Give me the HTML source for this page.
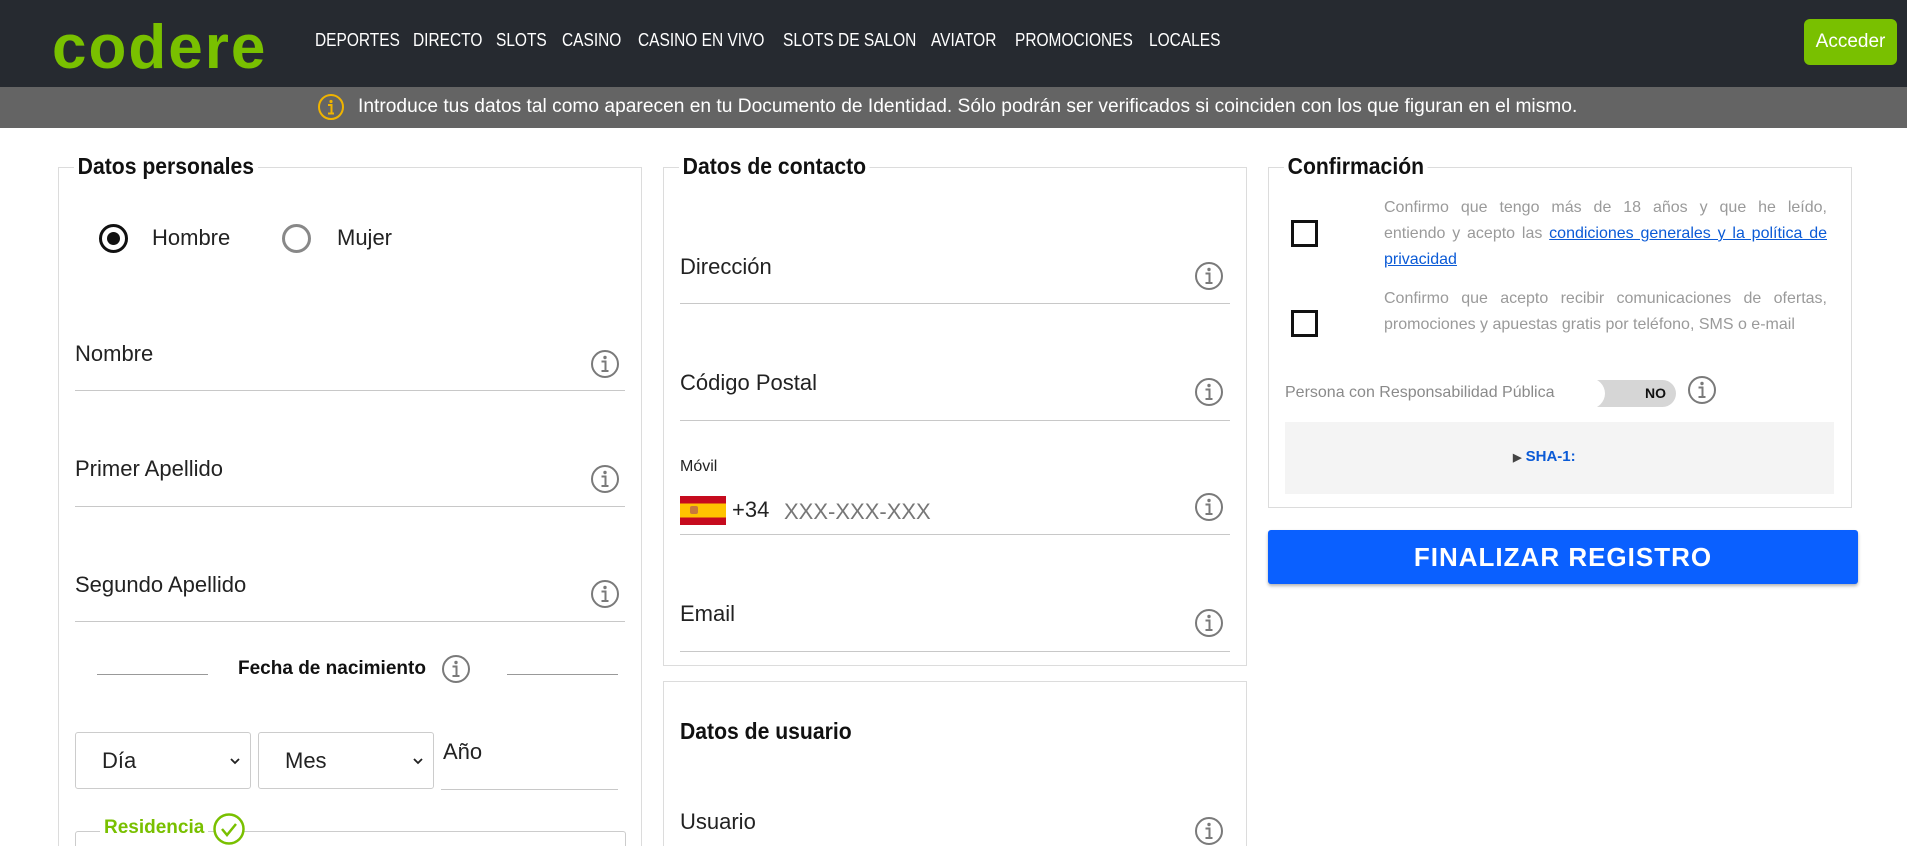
<!DOCTYPE html>
<html><head><meta charset="utf-8"><style>
*{margin:0;padding:0;box-sizing:border-box}
html{width:1907px;height:846px;overflow:hidden}
body{width:1907px;height:846px;overflow:hidden;background:#fff;font-family:"Liberation Sans",Arial,sans-serif;position:relative;color:#222}
.a{position:absolute;white-space:nowrap}
.hdr{left:0;top:0;width:1907px;height:87px;background:#262a30}
.bar{left:0;top:87px;width:1907px;height:41px;background:#646464}
.nav{top:30px;color:#fff;font-size:18px;transform:scaleX(.86);transform-origin:left}
.box{border:1px solid #dcdcdc}
.leg{font-size:23px;font-weight:bold;background:#fff;padding:0 4px;color:#111;transform:scaleX(.92);transform-origin:left}
.lbl{font-size:22px;color:#222}
.ln{height:1px;background:#c8c8c8}
.ii{width:30px;height:30px}
.gt{font-size:16px;color:#9a9a9a;line-height:26px;width:443px}
.gt div{text-align:justify;text-align-last:justify}
.gt div.l{text-align-last:left}
</style></head><body>
<div class="a hdr"></div>
<div class="a" style="left:52px;top:8px;font-size:62px;font-weight:bold;color:#79c000;letter-spacing:2px;line-height:80px">codere</div>
<div class="a nav" style="left:315px">DEPORTES</div>
<div class="a nav" style="left:413px">DIRECTO</div>
<div class="a nav" style="left:496px">SLOTS</div>
<div class="a nav" style="left:562px">CASINO</div>
<div class="a nav" style="left:638px">CASINO EN VIVO</div>
<div class="a nav" style="left:783px">SLOTS DE SALON</div>
<div class="a nav" style="left:931px">AVIATOR</div>
<div class="a nav" style="left:1015px">PROMOCIONES</div>
<div class="a nav" style="left:1149px">LOCALES</div>
<div class="a" style="left:1804px;top:19px;width:93px;height:46px;background:#79c000;border-radius:6px;color:#fff;font-size:19px;line-height:46px;text-align:center">Acceder</div>
<div class="a bar"></div>
<svg class="a" style="left:317px;top:93px" width="28" height="28" viewBox="0 0 28 28"><circle cx="14" cy="14" r="12" fill="none" stroke="#f0b400" stroke-width="2"/><circle cx="14" cy="8.5" r="1.6" fill="#f0b400"/><path d="M11 12h3.5v8M11 20.5h6" stroke="#f0b400" stroke-width="2" fill="none"/></svg>
<div class="a" style="left:358px;top:96px;font-size:19px;color:#fff;transform:scaleX(1.01);transform-origin:left">Introduce tus datos tal como aparecen en tu Documento de Identidad. Sólo podrán ser verificados si coinciden con los que figuran en el mismo.</div>

<!-- col1 -->
<div class="a box" style="left:58px;top:167px;width:584px;height:680px;border-bottom:none"></div>
<div class="a leg" style="left:74px;top:153px">Datos personales</div>
<div class="a" style="left:99px;top:224px;width:29px;height:29px;border:3px solid #111;border-radius:50%"></div>
<div class="a" style="left:107px;top:232px;width:13px;height:13px;background:#111;border-radius:50%"></div>
<div class="a lbl" style="left:152px;top:225px">Hombre</div>
<div class="a" style="left:282px;top:224px;width:29px;height:29px;border:3px solid #888;border-radius:50%"></div>
<div class="a lbl" style="left:337px;top:225px">Mujer</div>
<div class="a lbl" style="left:75px;top:341px">Nombre</div><div class="a ln" style="left:75px;top:390px;width:550px"></div>
<div class="a lbl" style="left:75px;top:456px">Primer Apellido</div><div class="a ln" style="left:75px;top:506px;width:550px"></div>
<div class="a lbl" style="left:75px;top:572px">Segundo Apellido</div><div class="a ln" style="left:75px;top:621px;width:550px"></div>
<div class="a ln" style="left:97px;top:674px;width:111px;background:#999"></div>
<div class="a ln" style="left:507px;top:674px;width:111px;background:#999"></div>
<div class="a" style="left:238px;top:658px;font-size:19px;font-weight:bold;color:#111">Fecha de nacimiento</div>
<div class="a" style="left:75px;top:732px;width:176px;height:57px;border:1px solid #ccc;border-radius:3px"></div>
<div class="a lbl" style="left:102px;top:748px">Día</div>
<svg class="a" style="left:229px;top:756px" width="12" height="10"><path d="M2 3l4 4 4-4" stroke="#222" stroke-width="1.8" fill="none"/></svg>
<div class="a" style="left:258px;top:732px;width:176px;height:57px;border:1px solid #ccc;border-radius:3px"></div>
<div class="a lbl" style="left:285px;top:748px">Mes</div>
<svg class="a" style="left:412px;top:756px" width="12" height="10"><path d="M2 3l4 4 4-4" stroke="#222" stroke-width="1.8" fill="none"/></svg>
<div class="a lbl" style="left:443px;top:739px">Año</div><div class="a ln" style="left:441px;top:789px;width:177px"></div>
<div class="a" style="left:75px;top:831px;width:551px;height:16px;border:1px solid #ccc;border-bottom:none;border-radius:3px 3px 0 0"></div>
<div class="a" style="left:100px;top:817px;background:#fff;padding:0 4px;font-size:19px;font-weight:bold;color:#79c000">Residencia</div>
<svg class="a" style="left:212px;top:812px" width="34" height="34" viewBox="0 0 34 34"><circle cx="17" cy="17" r="14.5" fill="#fff" stroke="#79c000" stroke-width="2.5"/><path d="M10 17l5 6 9-11" stroke="#79c000" stroke-width="2.5" fill="none"/></svg>

<!-- col2 -->
<div class="a box" style="left:663px;top:167px;width:584px;height:499px"></div>
<div class="a leg" style="left:679px;top:153px">Datos de contacto</div>
<div class="a lbl" style="left:680px;top:254px">Dirección</div><div class="a ln" style="left:680px;top:303px;width:550px"></div>
<div class="a lbl" style="left:680px;top:370px">Código Postal</div><div class="a ln" style="left:680px;top:420px;width:550px"></div>
<div class="a" style="left:680px;top:458px;font-size:16px">Móvil</div>
<div class="a" style="left:680px;top:496px;width:46px;height:29px;background:linear-gradient(#c60b1e 0 25%,#ffc400 25% 75%,#c60b1e 75%)"></div>
<div class="a" style="left:690px;top:506px;width:8px;height:8px;background:#c8783c;border-radius:2px"></div>
<div class="a lbl" style="left:732px;top:497px">+34</div>
<div class="a lbl" style="left:784px;top:499px;color:#777">XXX-XXX-XXX</div>
<div class="a ln" style="left:680px;top:534px;width:550px"></div>
<div class="a lbl" style="left:680px;top:601px">Email</div><div class="a ln" style="left:680px;top:651px;width:550px"></div>
<div class="a box" style="left:663px;top:681px;width:584px;height:166px;border-bottom:none"></div>
<div class="a" style="left:680px;top:718px;font-size:23px;font-weight:bold;color:#111;transform:scaleX(.92);transform-origin:left">Datos de usuario</div>
<div class="a lbl" style="left:680px;top:809px">Usuario</div>

<!-- col3 -->
<div class="a box" style="left:1268px;top:167px;width:584px;height:341px"></div>
<div class="a leg" style="left:1284px;top:153px">Confirmación</div>
<div class="a" style="left:1291px;top:220px;width:27px;height:27px;border:3px solid #111"></div>
<div class="a gt" style="left:1384px;top:195px"><div>Confirmo que tengo más de 18 años y que he leído,</div><div>entiendo y acepto las <span style="color:#0a5ad6;text-decoration:underline">condiciones generales y la política de</span></div><div class="l"><span style="color:#0a5ad6;text-decoration:underline">privacidad</span></div></div>
<div class="a" style="left:1291px;top:310px;width:27px;height:27px;border:3px solid #111"></div>
<div class="a gt" style="left:1384px;top:286px"><div>Confirmo que acepto recibir comunicaciones de ofertas,</div><div class="l">promociones y apuestas gratis por teléfono, SMS o e-mail</div></div>
<div class="a" style="left:1285px;top:384px;font-size:16px;color:#8a8a8a">Persona con Responsabilidad Pública</div>
<div class="a" style="left:1576px;top:380px;width:100px;height:27px;background:#d6d6d6;border-radius:14px"></div>
<div class="a" style="left:1573px;top:378px;width:32px;height:31px;background:#fff;border-radius:50%"></div>
<div class="a" style="left:1645px;top:385px;font-size:14px;font-weight:bold;color:#111">NO</div>
<div class="a" style="left:1285px;top:422px;width:549px;height:72px;background:#f4f4f4"></div>
<div class="a" style="left:1513px;top:448px;font-size:15px;font-weight:bold;color:#0a5ad6"><span style="color:#444;font-size:11px">&#9654;</span> SHA-1:</div>
<div class="a" style="left:1268px;top:530px;width:590px;height:54px;background:#0a60ff;border-radius:3px;box-shadow:0 2px 3px rgba(0,0,0,.3);color:#fff;font-size:26px;font-weight:bold;text-align:center;line-height:54px;letter-spacing:1px">FINALIZAR REGISTRO</div>

<!-- info icons -->
<svg width="0" height="0" style="position:absolute"><defs><symbol id="i" viewBox="0 0 30 30"><circle cx="15" cy="15" r="13" fill="none" stroke="#7a7a7a" stroke-width="2"/><circle cx="15" cy="8.5" r="1.7" fill="#7a7a7a"/><path d="M11.5 12.5h4v9M11.5 22h7" stroke="#7a7a7a" stroke-width="2" fill="none"/></symbol></defs></svg>
<svg class="a ii" style="left:590px;top:349px"><use href="#i"/></svg>
<svg class="a ii" style="left:590px;top:464px"><use href="#i"/></svg>
<svg class="a ii" style="left:590px;top:579px"><use href="#i"/></svg>
<svg class="a ii" style="left:441px;top:654px"><use href="#i"/></svg>
<svg class="a ii" style="left:1194px;top:261px"><use href="#i"/></svg>
<svg class="a ii" style="left:1194px;top:377px"><use href="#i"/></svg>
<svg class="a ii" style="left:1194px;top:492px"><use href="#i"/></svg>
<svg class="a ii" style="left:1194px;top:608px"><use href="#i"/></svg>
<svg class="a ii" style="left:1194px;top:816px;height:30px"><use href="#i"/></svg>
<svg class="a ii" style="left:1687px;top:375px"><use href="#i"/></svg>
</body></html>
